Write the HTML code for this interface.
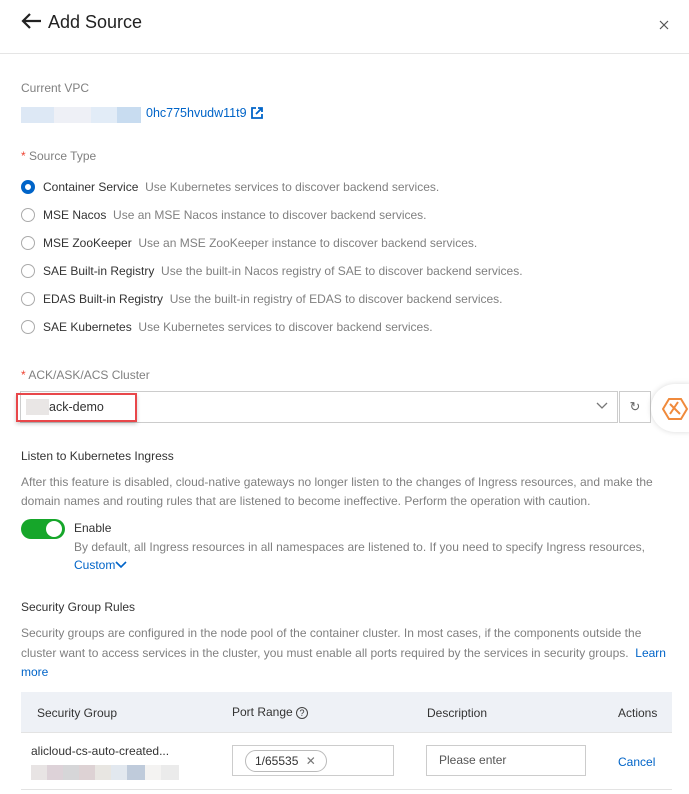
<!DOCTYPE html>
<html><head><style>
*{margin:0;padding:0;box-sizing:border-box}
body{width:689px;height:794px;overflow:hidden;background:#fff;font-family:"Liberation Sans",sans-serif;font-size:12px;color:#333;position:relative}
.a{position:absolute;white-space:nowrap}
.g{color:#808080}
.l{color:#0064c8}
.r{position:absolute;left:21px;width:14px;height:14px;border:1px solid #aaa;border-radius:50%}
.rt{position:absolute;left:43px}
.red{color:#e43}
</style></head><body>
<div class="a" style="left:20px;top:12px;font-size:18px;color:#222">
<svg width="22" height="18" viewBox="0 0 22 18" style="vertical-align:-2px;margin-right:6px"><path d="M21 9H3M10 2L3 9l7 7" stroke="#222" stroke-width="2.2" fill="none"/></svg>Add Source</div>
<svg class="a" style="left:659px;top:20px" width="10" height="10" viewBox="0 0 10 10"><path d="M1 1l8 8M9 1L1 9" stroke="#555" stroke-width="1.2"/></svg>
<div class="a" style="left:0;top:53px;width:689px;height:1px;background:#e5e5e5"></div>
<div class="a g" style="left:21px;top:81px">Current VPC</div>
<div class="a" style="left:21px;top:107px;width:125px;height:16px;background:linear-gradient(90deg,#dde8f5 0 33px,#eef0f6 33px 70px,#e2ecf7 70px 96px,#c8dcf0 96px 120px,#fff 120px)"></div>
<div class="a l" style="left:146px;top:106px;font-size:12.5px">0hc775hvudw11t9</div>
<svg class="a" style="left:251px;top:107px" width="12" height="12" viewBox="0 0 12 12"><path d="M5 1H1v10h10V7M7 1h4v4M11 1L5 7" stroke="#0064c8" stroke-width="1.8" fill="none"/></svg>
<div class="a g" style="left:21px;top:149px"><span class="red">*</span> Source Type</div>
<div class="r" style="top:180px;border:4px solid #0064c8;"></div>
<div class="a rt" style="top:180px"><span style="color:#333">Container Service</span> <span class="g">&nbsp;Use Kubernetes services to discover backend services.</span></div>
<div class="r" style="top:208px"></div><div class="a rt" style="top:208px">MSE Nacos <span class="g">&nbsp;Use an MSE Nacos instance to discover backend services.</span></div>
<div class="r" style="top:236px"></div><div class="a rt" style="top:236px">MSE ZooKeeper <span class="g">&nbsp;Use an MSE ZooKeeper instance to discover backend services.</span></div>
<div class="r" style="top:264px"></div><div class="a rt" style="top:264px">SAE Built-in Registry <span class="g">&nbsp;Use the built-in Nacos registry of SAE to discover backend services.</span></div>
<div class="r" style="top:292px"></div><div class="a rt" style="top:292px">EDAS Built-in Registry <span class="g">&nbsp;Use the built-in registry of EDAS to discover backend services.</span></div>
<div class="r" style="top:320px"></div><div class="a rt" style="top:320px">SAE Kubernetes <span class="g">&nbsp;Use Kubernetes services to discover backend services.</span></div>
<div class="a g" style="left:21px;top:368px"><span class="red">*</span> ACK/ASK/ACS Cluster</div>
<div class="a" style="left:20px;top:391px;width:598px;height:32px;border:1px solid #ccc"></div>
<svg class="a" style="left:596px;top:402px" width="12" height="8" viewBox="0 0 12 8"><path d="M1 1l5 5 5-5" stroke="#777" stroke-width="1.3" fill="none"/></svg>
<div class="a" style="left:619px;top:391px;width:32px;height:32px;border:1px solid #ccc;text-align:center;line-height:30px;color:#666;font-size:13px">↻</div>
<div class="a" style="left:16px;top:393px;width:121px;height:29px;border:2px solid #e8474a;box-shadow:0 2px 4px rgba(0,0,0,.2)"></div>
<div class="a" style="left:26px;top:399px;width:23px;height:16px;background:#e9e6e5"></div>
<div class="a" style="left:49px;top:400px;font-size:12.5px">ack-demo</div>
<div class="a" style="left:651px;top:384px;width:40px;height:48px;border-radius:24px 0 0 24px;background:#fff;box-shadow:0 0 6px rgba(0,0,0,.15)"></div>
<svg class="a" style="left:662px;top:397px" width="26" height="24" viewBox="0 0 26 24"><path d="M7 2h12l6 10-6 10H7L1 12z M8 7l10 10M16 5L8 17" stroke="#f08a3c" stroke-width="2" fill="none"/></svg>
<div class="a" style="left:21px;top:449px">Listen to Kubernetes Ingress</div>
<div class="a g" style="left:21px;top:473px;white-space:normal;width:640px;line-height:19px">After this feature is disabled, cloud-native gateways no longer listen to the changes of Ingress resources, and make the domain names and routing rules that are listened to become ineffective. Perform the operation with caution.</div>
<div class="a" style="left:21px;top:519px;width:44px;height:20px;border-radius:10px;background:#16a62a"></div>
<div class="a" style="left:46px;top:521px;width:16px;height:16px;border-radius:50%;background:#fff"></div>
<div class="a" style="left:74px;top:521px">Enable</div>
<div class="a g" style="left:74px;top:540px">By default, all Ingress resources in all namespaces are listened to. If you need to specify Ingress resources,</div>
<div class="a l" style="left:74px;top:558px">Custom<svg width="12" height="8" viewBox="0 0 12 8"><path d="M1 1l5 5 5-5" stroke="#0064c8" stroke-width="1.6" fill="none"/></svg></div>
<div class="a" style="left:21px;top:600px">Security Group Rules</div>
<div class="a g" style="left:21px;top:624px;white-space:normal;width:645px;line-height:19.5px">Security groups are configured in the node pool of the container cluster. In most cases, if the components outside the cluster want to access services in the cluster, you must enable all ports required by the services in security groups. &nbsp;<span class="l">Learn more</span></div>
<div class="a" style="left:21px;top:692px;width:651px;height:41px;background:#eef1f6;border-bottom:1px solid #e3e3e3"></div>
<div class="a" style="left:37px;top:706px">Security Group</div>
<div class="a" style="left:232px;top:705px">Port Range <span style="display:inline-block;width:12px;height:12px;border:1px solid #444;border-radius:50%;font-size:9px;text-align:center;line-height:10px">?</span></div>
<div class="a" style="left:427px;top:706px">Description</div>
<div class="a" style="left:618px;top:706px">Actions</div>
<div class="a" style="left:31px;top:744px">alicloud-cs-auto-created...</div>
<div class="a" style="left:31px;top:765px;width:148px;height:15px;background:linear-gradient(90deg,#e8e4e4 0 16px,#ddd2d8 16px 32px,#d6d6d8 32px 48px,#ddd2d4 48px 64px,#e8e6e2 64px 80px,#e2e8ef 80px 96px,#bfcbdb 96px 114px,#f4f3f2 114px 130px,#ebebeb 130px)"></div>
<div class="a" style="left:232px;top:745px;width:162px;height:31px;border:1px solid #ccc"></div>
<div class="a" style="left:245px;top:750px;width:82px;height:22px;border:1px solid #bbb;border-radius:11px;padding-left:9px;line-height:20px">1/65535 <span style="color:#777;margin-left:4px">✕</span></div>
<div class="a" style="left:426px;top:745px;width:160px;height:31px;border:1px solid #ccc;padding-left:12px;line-height:29px;color:#555">Please enter</div>
<div class="a l" style="left:618px;top:755px">Cancel</div>
<div class="a" style="left:21px;top:789px;width:651px;height:1px;background:#e3e3e3"></div>
</body></html>
